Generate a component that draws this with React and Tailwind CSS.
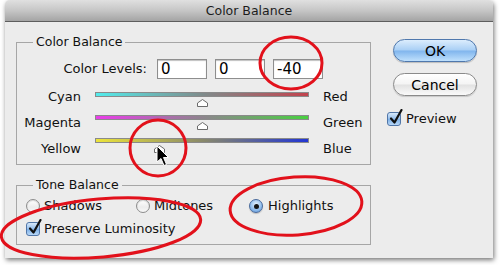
import React from 'react';

const sliders = [
  { left: 'Cyan', right: 'Red', value: 0, track: 'bg-[linear-gradient(to_right,#52ecec,#7f8c8c_50%,#c2434d)]' },
  { left: 'Magenta', right: 'Green', value: 0, track: 'bg-[linear-gradient(to_right,#ea3cea,#8e848e_50%,#48d040)]' },
  { left: 'Yellow', right: 'Blue', value: -40, track: 'bg-[linear-gradient(to_right,#ece43a,#8a8a6a_50%,#2236d4)]' },
];

function Thumb({ value }) {
  // track is 214px wide, thumb is 11px wide
  const left = 107 + (value / 100) * 107 - 5.5;
  return (
    <svg className="absolute top-[7px]" style={{ left }} width="11" height="8" viewBox="0 0 11 8">
      <path d="M5.5 0.5 L10.5 4 L10.5 7.5 L0.5 7.5 L0.5 4 Z" fill="#fff" stroke="#6b6b6b" />
    </svg>
  );
}

function Radio({ checked }) {
  if (checked) {
    return (
      <div className="w-[14px] h-[14px] rounded-full border border-[#47699b] bg-[radial-gradient(circle_at_50%_35%,#e4f1fd,#8dbbec_60%,#5d95d8)] flex items-center justify-center shadow-[0_1px_1px_rgba(0,0,0,0.2)]">
        <div className="w-[5px] h-[5px] rounded-full bg-[#151515]" />
      </div>
    );
  }
  return (
    <div className="w-[14px] h-[14px] rounded-full border border-[#8c8c8c] bg-[linear-gradient(#ffffff,#ececec_60%,#f8f8f8)] shadow-[inset_0_1px_1px_rgba(0,0,0,0.15)]" />
  );
}

function CheckBox() {
  return (
    <div className="relative w-[14px] h-[14px] rounded-[3px] border border-[#5176a8] bg-[linear-gradient(#d8eafc,#93bdeb_50%,#7cafe6_51%,#b8d8f8)]">
      <svg className="absolute -top-[4px] left-[1px]" width="14" height="16" viewBox="0 0 14 16">
        <path d="M2 9.5 L5.5 13.5 L12.5 1" fill="none" stroke="#111" strokeWidth="2.2" strokeLinecap="round" strokeLinejoin="round" />
      </svg>
    </div>
  );
}

function LevelInput({ value }) {
  return (
    <div className="w-[50px] h-[20px] bg-white border border-[#8e8e8e] shadow-[inset_0_1px_1px_rgba(0,0,0,0.25)] pl-[3px] text-[15px] leading-[18px] text-black">
      {value}
    </div>
  );
}

export default function App() {
  return (
    <div className="relative w-[500px] h-[265px] bg-white overflow-hidden font-['DejaVu_Sans',sans-serif] text-[13px] text-[#111]">
      <div className="ml-[5px] w-[488px] h-[258px] bg-[#ececec] rounded-t-[5px] shadow-[1px_2px_5px_rgba(0,0,0,0.55)] flex flex-col">
        <div className="h-[22px] rounded-t-[5px] border-b border-[#5e5e5e] bg-[linear-gradient(#e0e0e0,#c6c6c6_50%,#a4a4a4)] flex items-center justify-center text-[12.5px] leading-[20px] text-[#1c1c1c]">
          Color Balance
        </div>

        <div className="flex">
          <div className="ml-[11px] w-[355px]">
            <fieldset className="mt-[13px] border border-[#a6a6a6]">
              <legend className="ml-[16px] px-[3px] leading-[14px] text-[12.5px]">Color Balance</legend>
              <div className="pt-[10px] pb-[2px]">
                <div className="flex items-center h-[20px]">
                  <div className="w-[130px] text-right">Color Levels:</div>
                  <div className="ml-[10px] flex gap-[8px]">
                    <LevelInput value="0" />
                    <LevelInput value="0" />
                    <LevelInput value="-40" />
                  </div>
                </div>

                <div className="flex items-start">
                  <div className="mt-[5px] w-[64px] text-right leading-[26px]">
                    {sliders.map((s) => (
                      <div key={s.left}>{s.left}</div>
                    ))}
                  </div>
                  <div className="mt-[13px] ml-[14px] w-[214px]">
                    {sliders.map((s) => (
                      <div key={s.left} className="relative h-[23px]">
                        <div className={`h-[5px] border border-[#8a8a8a] ${s.track}`} />
                        <Thumb value={s.value} />
                      </div>
                    ))}
                  </div>
                  <div className="mt-[5px] ml-[14px] leading-[26px]">
                    {sliders.map((s) => (
                      <div key={s.right}>{s.right}</div>
                    ))}
                  </div>
                </div>
              </div>
            </fieldset>

            <fieldset className="mt-[13px] border border-[#a6a6a6]">
              <legend className="ml-[16px] px-[3px] leading-[14px] text-[12.5px]">Tone Balance</legend>
              <div className="pl-[9px] pt-[7px] pb-[8px]">
                <div className="flex items-center h-[14px]">
                  <div className="w-[110px] flex items-center gap-[4px]">
                    <Radio />
                    <span>Shadows</span>
                  </div>
                  <div className="w-[113px] flex items-center gap-[4px]">
                    <Radio />
                    <span>Midtones</span>
                  </div>
                  <div className="flex items-center gap-[5px]">
                    <Radio checked />
                    <span>Highlights</span>
                  </div>
                </div>
                <div className="mt-[9px] flex items-center h-[14px] gap-[4px]">
                  <CheckBox />
                  <span>Preserve Luminosity</span>
                </div>
              </div>
            </fieldset>
          </div>

          <div className="ml-[22px] w-[84px]">
            <button className="mt-[17px] w-[84px] h-[23px] rounded-full border border-[#4f78ad] bg-[linear-gradient(#dcedfd,#a9cff5_48%,#80b5ed_52%,#bfe0fc)] text-[14px] leading-[20px] text-black shadow-[0_1px_1px_rgba(0,0,0,0.2)]">
              OK
            </button>
            <button className="mt-[11px] w-[84px] h-[23px] rounded-full border border-[#8a8a8a] bg-[linear-gradient(#ffffff,#f4f4f4_48%,#e2e2e2_52%,#fafafa)] text-[14px] leading-[20px] text-black shadow-[0_1px_1px_rgba(0,0,0,0.15)]">
              Cancel
            </button>
            <div className="mt-[16px] -ml-[6px] flex items-center gap-[5px] h-[14px]">
              <CheckBox />
              <span>Preview</span>
            </div>
          </div>
        </div>
      </div>

      <svg className="absolute inset-0 pointer-events-none" width="500" height="265" viewBox="0 0 500 265">
        <g fill="none" stroke="#e2111b" strokeWidth="3">
          <ellipse cx="291" cy="63" rx="31" ry="26" />
          <ellipse cx="158" cy="148" rx="28" ry="28" />
          <ellipse cx="101" cy="228" rx="100" ry="29" transform="rotate(-5 101 228)" />
          <ellipse cx="296" cy="206" rx="66" ry="29" transform="rotate(-4 296 206)" />
        </g>
        <path d="M157 146 L157 162 L161 158.5 L164 165.5 L166.5 164.5 L163.5 157.5 L168.5 157.5 Z" fill="#000" stroke="#fff" strokeWidth="1" strokeLinejoin="round" />
      </svg>
    </div>
  );
}
